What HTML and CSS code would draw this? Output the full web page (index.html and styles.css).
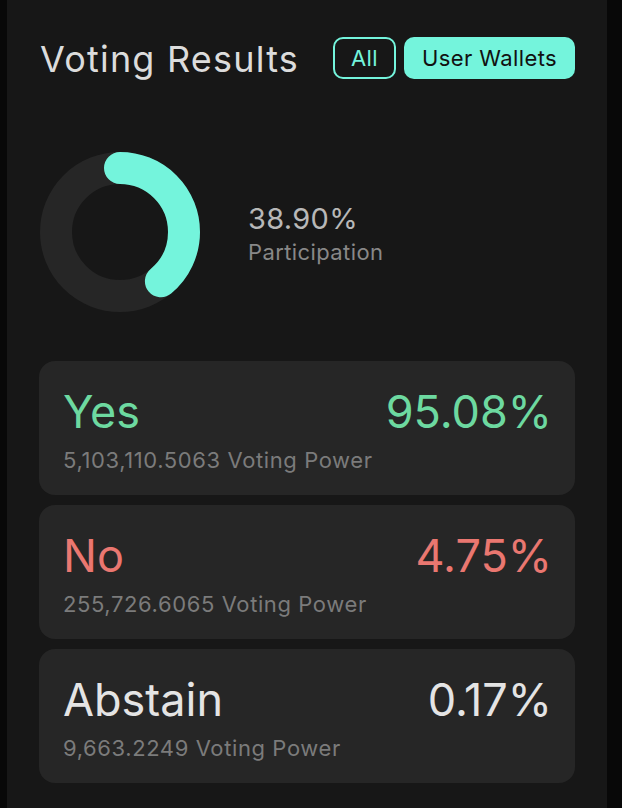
FILE: index.html
```html
<!DOCTYPE html>
<html>
<head>
<meta charset="utf-8">
<link rel="stylesheet" href="styles.css">
</head>
<body>
<div class="panel">
  <div class="header">
    <h1 class="title">Voting Results</h1>
    <div class="tabs">
      <button class="tab tab-outline">All</button>
      <button class="tab tab-filled">User Wallets</button>
    </div>
  </div>
  <div class="summary">
    <svg class="donut" width="162" height="162" viewBox="0 0 162 162">
      <circle cx="81" cy="81" r="64" fill="none" stroke="#262626" stroke-width="32"/>
      <circle cx="81" cy="81" r="64" fill="none" stroke="#74f4dc" stroke-width="32" stroke-linecap="round" stroke-dasharray="156.4 402.1" transform="rotate(-90 81 81)"/>
    </svg>
    <div class="summary-text">
      <div class="pct">38.90%</div>
      <div class="label">Participation</div>
    </div>
  </div>
  <div class="cards">
    <div class="card">
      <div class="row"><span class="name yes">Yes</span><span class="value yes">95.08%</span></div>
      <div class="power">5,103,110.5063 Voting Power</div>
    </div>
    <div class="card">
      <div class="row"><span class="name no">No</span><span class="value no">4.75%</span></div>
      <div class="power">255,726.6065 Voting Power</div>
    </div>
    <div class="card">
      <div class="row"><span class="name abstain">Abstain</span><span class="value abstain">0.17%</span></div>
      <div class="power">9,663.2249 Voting Power</div>
    </div>
  </div>
</div>
</body>
</html>
```
FILE: styles.css
```css
html, body {
  margin: 0;
  padding: 0;
  background: #080808;
  height: 100%;
}
body {
  font-family: Inter, "Noto Sans", sans-serif;
}
.panel {
  margin-left: 7px;
  width: 600px;
  min-height: 808px;
  box-sizing: border-box;
  background: #171717;
  padding: 37px 32px 0 32px;
}
.header {
  display: flex;
  align-items: center;
  justify-content: space-between;
  height: 42px;
}
.title {
  margin: 2px 0 0 1px;
  font-weight: 400;
  font-size: 36px;
  color: #dcdcdc;
  letter-spacing: 1.2px;
}
.tabs {
  display: flex;
  gap: 8px;
}
.tab {
  font-family: inherit;
  font-size: 22px;
  letter-spacing: 0.4px;
  height: 42px;
  border-radius: 10px;
  padding: 0;
  cursor: pointer;
}
.tab-outline {
  background: transparent;
  border: 2px solid #74f4dc;
  color: #74f4dc;
  width: 63px;
}
.tab-filled {
  background: #74f4dc;
  border: none;
  color: #111;
  width: 171px;
}
.summary {
  display: flex;
  align-items: center;
  margin-top: 72px;
  gap: 47px;
}
.donut {
  display: block;
}
.summary-text {
  margin-top: 4px;
}
.pct {
  font-size: 29px;
  line-height: 34px;
  color: #b8b8b8;
  letter-spacing: 0.3px;
}
.label {
  font-size: 22px;
  line-height: 28px;
  color: #888;
  margin-top: 2px;
  letter-spacing: 0.4px;
}
.cards {
  margin-top: 48px;
  display: flex;
  flex-direction: column;
  gap: 10px;
}
.card {
  background: #262626;
  border-radius: 16px;
  height: 134px;
  box-sizing: border-box;
  padding: 24px 23px 0 24px;
}
.row {
  display: flex;
  justify-content: space-between;
  align-items: baseline;
  font-size: 45px;
  line-height: 54px;
}
.yes { color: #6dd9a0; }
.no { color: #ea7770; }
.abstain { color: #e4e4e4; }
.power {
  margin-top: 8px;
  font-size: 22px;
  letter-spacing: 0.6px;
  color: #7b7b7b;
}
```
